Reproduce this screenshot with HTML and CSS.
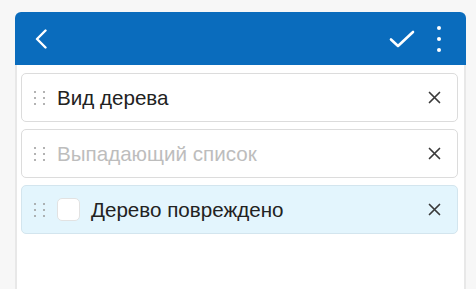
FILE: index.html
```html
<!DOCTYPE html>
<html lang="ru">
<head>
  <meta charset="UTF-8" />
  <meta name="viewport" content="width=device-width, initial-scale=1.0"/>
  <title>Поля формы</title>
  <link rel="stylesheet" href="styles.css">
</head>
<body>
  <div class="panel">
    <div class="header">
      <button class="icon-btn back" aria-label="Назад">
        <svg width="13" height="20" viewBox="0 0 13 20"><path d="M10.5 1.5 L2 10 L10.5 18.5" fill="none" stroke="#fff" stroke-width="2.4" stroke-linecap="round" stroke-linejoin="round"/></svg>
      </button>
      <div class="spacer"></div>
      <button class="icon-btn" aria-label="Готово">
        <svg width="26" height="18" viewBox="0 0 26 18"><path d="M2 9.5 L9 16 L24 2" fill="none" stroke="#fff" stroke-width="2.6" stroke-linecap="round" stroke-linejoin="round"/></svg>
      </button>
      <button class="icon-btn menu" aria-label="Меню">
        <svg width="6" height="26" viewBox="0 0 6 26"><circle cx="3" cy="2" r="2" fill="#fff"/><circle cx="3" cy="13" r="2" fill="#fff"/><circle cx="3" cy="24" r="2" fill="#fff"/></svg>
      </button>
    </div>

    <div class="content">
      <!-- field rows -->
      <div class="row">
        <span class="grip"><i></i><i></i><i></i><i></i><i></i><i></i></span>
        <span class="label">Вид дерева</span>
        <span class="remove"><svg width="13" height="13" viewBox="0 0 13 13"><path d="M1.5 1.5 L11.5 11.5 M11.5 1.5 L1.5 11.5" stroke="#3a3a3a" stroke-width="1.7" stroke-linecap="round"/></svg></span>
      </div>
      <div class="row">
        <span class="grip"><i></i><i></i><i></i><i></i><i></i><i></i></span>
        <span class="label placeholder">Выпадающий список</span>
        <span class="remove"><svg width="13" height="13" viewBox="0 0 13 13"><path d="M1.5 1.5 L11.5 11.5 M11.5 1.5 L1.5 11.5" stroke="#3a3a3a" stroke-width="1.7" stroke-linecap="round"/></svg></span>
      </div>
      <div class="row active">
        <span class="grip"><i></i><i></i><i></i><i></i><i></i><i></i></span>
        <span class="checkbox"></span>
        <span class="label">Дерево повреждено</span>
        <span class="remove"><svg width="13" height="13" viewBox="0 0 13 13"><path d="M1.5 1.5 L11.5 11.5 M11.5 1.5 L1.5 11.5" stroke="#3a3a3a" stroke-width="1.7" stroke-linecap="round"/></svg></span>
      </div>
    </div>
  </div>
</body>
</html>
```

FILE: styles.css
```css
html, body {
  margin: 0;
  height: 100%;
}
body {
  font-family: "Liberation Sans", Arial, sans-serif;
  background-color: #f7f7f7;
  padding: 12px 10px 0 15px;
  box-sizing: border-box;
  overflow: hidden;
}
.panel {
  width: 451px;
  height: 100%;
  display: flex;
  flex-direction: column;
}
.header {
  height: 53px;
  background-color: #0a6cbd;
  border-radius: 6px 6px 0 0;
  display: flex;
  align-items: center;
  padding: 0 24px 0 20px;
  flex-shrink: 0;
}
.spacer {
  flex: 1;
}
.icon-btn {
  background: none;
  border: none;
  padding: 0;
  display: flex;
  align-items: center;
  cursor: pointer;
}
.back {
  margin-top: 1px;
}
.menu {
  margin-left: 21px;
  margin-top: 1px;
}
.content {
  flex: 1;
  background-color: #fff;
  border-left: 2px solid #e8e8e8;
  border-right: 2px solid #e8e8e8;
  padding: 8px 6px 0 4px;
  display: flex;
  flex-direction: column;
  gap: 7px;
}
.row {
  height: 49px;
  box-sizing: border-box;
  border: 1px solid #dcdcdc;
  border-radius: 5px;
  background-color: #fff;
  display: flex;
  align-items: center;
  padding: 0 16px 0 12px;
}
.row.active {
  background-color: #e3f5fd;
  border-color: #d3e5ee;
}
.grip {
  width: 11px;
  display: grid;
  grid-template-columns: 2px 2px;
  column-gap: 7px;
  row-gap: 4px;
  margin-right: 12px;
}
.grip i {
  width: 2px;
  height: 2px;
  border-radius: 50%;
  background-color: #9a9a9a;
}
.checkbox {
  width: 21px;
  height: 21px;
  border: 1px solid #e2e2e2;
  border-radius: 5px;
  background-color: #fff;
  margin-right: 11px;
}
.label {
  flex: 1;
  font-size: 20.6px;
  color: #222;
}
.label.placeholder {
  color: #bdbdbd;
}
.remove {
  display: flex;
  align-items: center;
}
```
